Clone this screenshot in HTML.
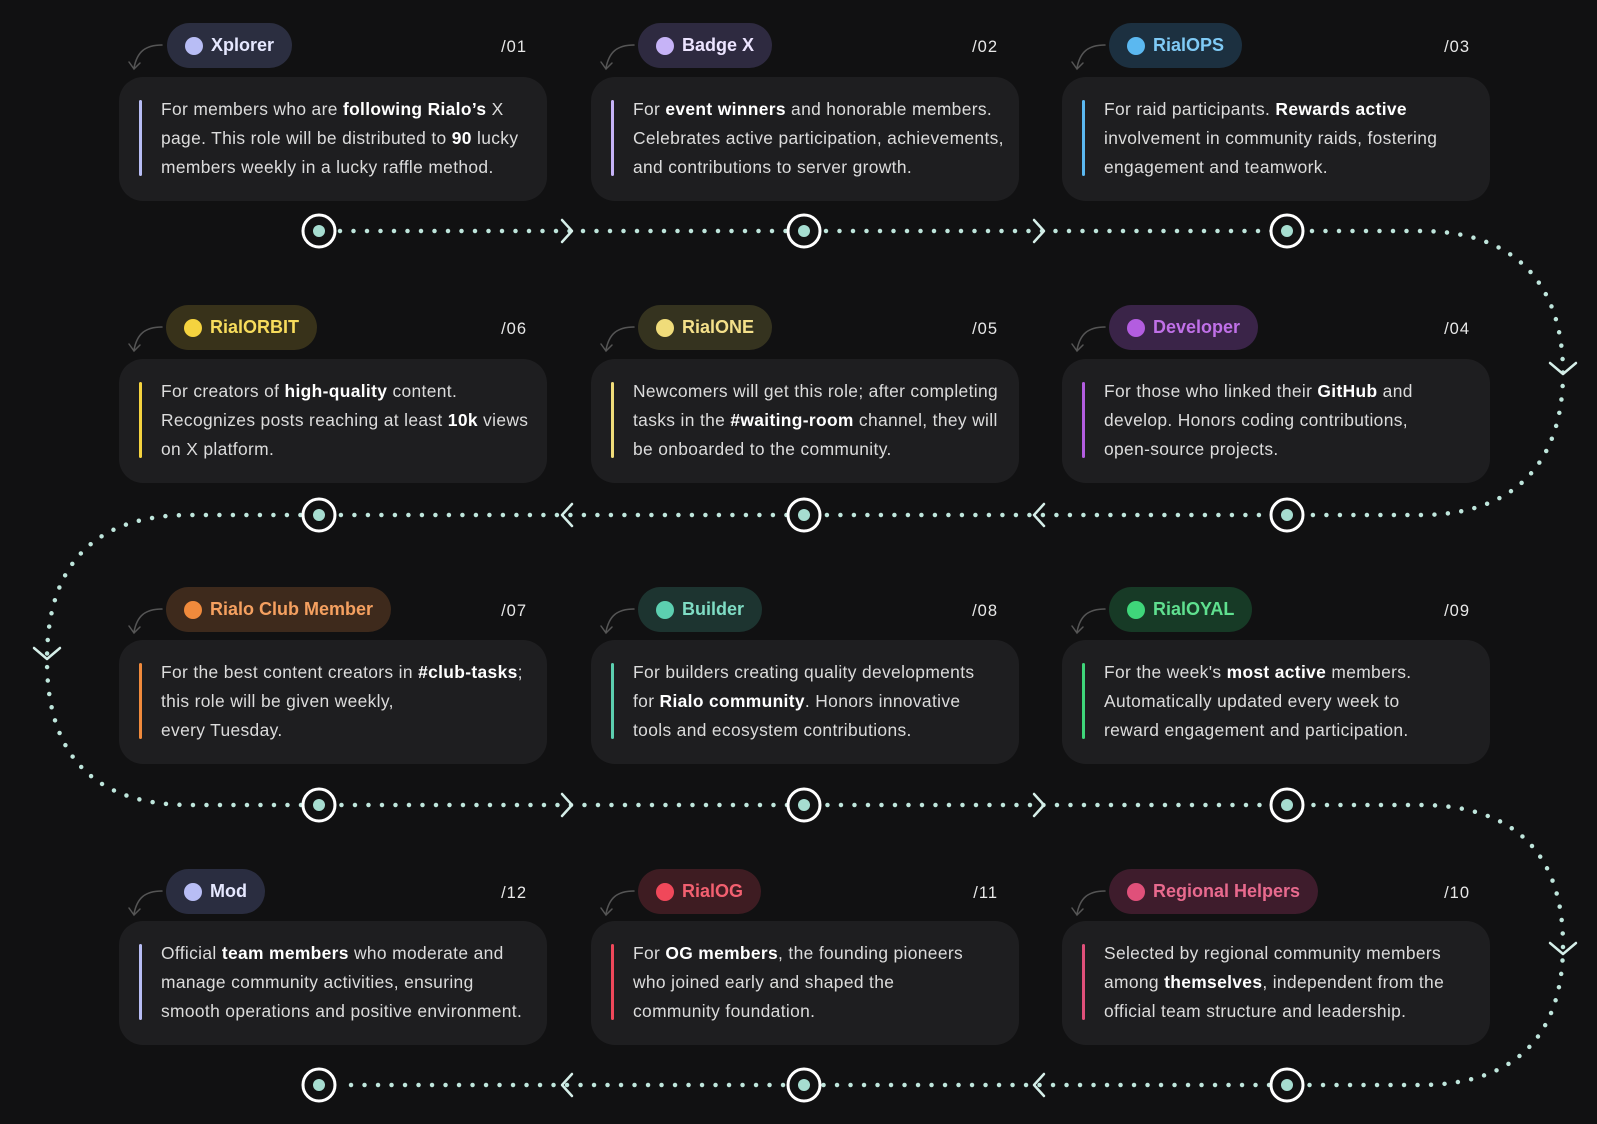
<!DOCTYPE html>
<html><head><meta charset="utf-8"><style>
*{margin:0;padding:0;box-sizing:border-box}
body{width:1597px;height:1124px;background:#111112;position:relative;overflow:hidden;font-family:"Liberation Sans",sans-serif}
.card{position:absolute;width:428px;height:124px;background:#1e1e20;border-radius:24px}
.card .bar{position:absolute;left:20px;top:23px;width:3px;height:76px;border-radius:2px}
.card p{position:absolute;left:42px;top:18px;white-space:nowrap;color:#dcdcdc;font-size:17.4px;line-height:29px;letter-spacing:0.35px}
.card b{color:#fff}
.pill{position:absolute;height:45px;border-radius:23px;display:flex;align-items:center;padding:0 18px 0 18px;font-size:18px;font-weight:bold;white-space:nowrap}
.pill i{display:inline-block;width:18px;height:18px;border-radius:50%;margin-right:8px}
.num{position:absolute;color:#e8e8e8;font-size:16.5px;width:60px;text-align:right;letter-spacing:1px}
svg{position:absolute;left:0;top:0}
</style></head><body>
<svg width="1597" height="1124">
<g fill="none" stroke="#bfe6dc" stroke-width="4.5" stroke-linecap="round" stroke-dasharray="0 13.5">
<path d="M340,231 H1420 C1530,231 1563,300 1563,373 C1563,446 1530,515 1420,515 H190 C80,515 47,580 47,660 C47,740 80,805 190,805 H1420 C1530,805 1563,870 1563,945 C1563,1020 1530,1085 1420,1085 H340"/>
</g>
<g fill="none" stroke="#d6efe9" stroke-width="2.5" stroke-linecap="round" stroke-linejoin="round">
<path d="M562,220 L572,231 L562,242"/><path d="M1034,220 L1044,231 L1034,242"/>
<path d="M572,504 L562,515 L572,526"/><path d="M1044,504 L1034,515 L1044,526"/>
<path d="M562,794 L572,805 L562,816"/><path d="M1034,794 L1044,805 L1034,816"/>
<path d="M572,1074 L562,1085 L572,1096"/><path d="M1044,1074 L1034,1085 L1044,1096"/>
<path d="M1550,363 L1563,374 L1576,363"/><path d="M1550,943 L1563,954 L1576,943"/>
<path d="M34,648 L47,659 L60,648"/>
</g>
<g fill="#111112" stroke="#fff" stroke-width="3">
<circle cx="319" cy="231" r="16"/><circle cx="804" cy="231" r="16"/><circle cx="1287" cy="231" r="16"/>
<circle cx="319" cy="515" r="16"/><circle cx="804" cy="515" r="16"/><circle cx="1287" cy="515" r="16"/>
<circle cx="319" cy="805" r="16"/><circle cx="804" cy="805" r="16"/><circle cx="1287" cy="805" r="16"/>
<circle cx="319" cy="1085" r="16"/><circle cx="804" cy="1085" r="16"/><circle cx="1287" cy="1085" r="16"/>
</g>
<g fill="#a6ddd0">
<circle cx="319" cy="231" r="6"/><circle cx="804" cy="231" r="6"/><circle cx="1287" cy="231" r="6"/>
<circle cx="319" cy="515" r="6"/><circle cx="804" cy="515" r="6"/><circle cx="1287" cy="515" r="6"/>
<circle cx="319" cy="805" r="6"/><circle cx="804" cy="805" r="6"/><circle cx="1287" cy="805" r="6"/>
<circle cx="319" cy="1085" r="6"/><circle cx="804" cy="1085" r="6"/><circle cx="1287" cy="1085" r="6"/>
</g>
<g fill="none" stroke="#555" stroke-width="1.5" stroke-linecap="round">
<path d="M162,45 C145,45 137,52 134,68 M129,62 L134,69 L140,63"/>
<path d="M634,45 C617,45 609,52 606,68 M601,62 L606,69 L612,63"/>
<path d="M1105,45 C1088,45 1080,52 1077,68 M1072,62 L1077,69 L1083,63"/>
<path d="M162,327 C145,327 137,334 134,350 M129,344 L134,351 L140,345"/>
<path d="M634,327 C617,327 609,334 606,350 M601,344 L606,351 L612,345"/>
<path d="M1105,327 C1088,327 1080,334 1077,350 M1072,344 L1077,351 L1083,345"/>
<path d="M162,609 C145,609 137,616 134,632 M129,626 L134,633 L140,627"/>
<path d="M634,609 C617,609 609,616 606,632 M601,626 L606,633 L612,627"/>
<path d="M1105,609 C1088,609 1080,616 1077,632 M1072,626 L1077,633 L1083,627"/>
<path d="M162,891 C145,891 137,898 134,914 M129,908 L134,915 L140,909"/>
<path d="M634,891 C617,891 609,898 606,914 M601,908 L606,915 L612,909"/>
<path d="M1105,891 C1088,891 1080,898 1077,914 M1072,908 L1077,915 L1083,909"/>
</g>
</svg>

<div class="pill" style="left:167px;top:23px;background:#2b2e40;color:#e6e8ff"><i style="background:#b8bdf5"></i>Xplorer</div>
<div class="num" style="left:467px;top:38px">/01</div>
<div class="card" style="left:119px;top:77px"><div class="bar" style="background:#b8bdf5"></div><p>For members who are <b>following Rialo’s</b> X<br>page. This role will be distributed to <b>90</b> lucky<br>members weekly in a lucky raffle method.</p></div>

<div class="pill" style="left:638px;top:23px;background:#2e2a40;color:#ece4ff"><i style="background:#c6b3f7"></i>Badge X</div>
<div class="num" style="left:938px;top:38px">/02</div>
<div class="card" style="left:591px;top:77px"><div class="bar" style="background:#c6b3f7"></div><p>For <b>event winners</b> and honorable members.<br>Celebrates active participation, achievements,<br>and contributions to server growth.</p></div>

<div class="pill" style="left:1109px;top:23px;background:#1c3040;color:#7fcaf5"><i style="background:#5bb8f0"></i>RialOPS</div>
<div class="num" style="left:1410px;top:38px">/03</div>
<div class="card" style="left:1062px;top:77px"><div class="bar" style="background:#5bb8f0"></div><p>For raid participants. <b>Rewards active</b><br>involvement in community raids, fostering<br>engagement and teamwork.</p></div>

<div class="pill" style="left:166px;top:305px;background:#38321a;color:#f7dc5c"><i style="background:#f5d33f"></i>RialORBIT</div>
<div class="num" style="left:467px;top:320px">/06</div>
<div class="card" style="left:119px;top:359px"><div class="bar" style="background:#f5d33f"></div><p>For creators of <b>high-quality</b> content.<br>Recognizes posts reaching at least <b>10k</b> views<br>on X platform.</p></div>

<div class="pill" style="left:638px;top:305px;background:#35331f;color:#f4e08a"><i style="background:#f0dc7a"></i>RialONE</div>
<div class="num" style="left:938px;top:320px">/05</div>
<div class="card" style="left:591px;top:359px"><div class="bar" style="background:#f0dc7a"></div><p>Newcomers will get this role; after completing<br>tasks in the <b>#waiting-room</b> channel, they will<br>be onboarded to the community.</p></div>

<div class="pill" style="left:1109px;top:305px;background:#3a2448;color:#c070e8"><i style="background:#b35de0"></i>Developer</div>
<div class="num" style="left:1410px;top:320px">/04</div>
<div class="card" style="left:1062px;top:359px"><div class="bar" style="background:#b35de0"></div><p>For those who linked their <b>GitHub</b> and<br>develop. Honors coding contributions,<br>open-source projects.</p></div>

<div class="pill" style="left:166px;top:587px;background:#3e2a1c;color:#f5a060"><i style="background:#f08a3c"></i>Rialo Club Member</div>
<div class="num" style="left:467px;top:602px">/07</div>
<div class="card" style="left:119px;top:640px"><div class="bar" style="background:#f08a3c"></div><p>For the best content creators in <b>#club-tasks</b>;<br>this role will be given weekly,<br>every Tuesday.</p></div>

<div class="pill" style="left:638px;top:587px;background:#1d3430;color:#7fdcc4"><i style="background:#5ccfb0"></i>Builder</div>
<div class="num" style="left:938px;top:602px">/08</div>
<div class="card" style="left:591px;top:640px"><div class="bar" style="background:#5ccfb0"></div><p>For builders creating quality developments<br>for <b>Rialo community</b>. Honors innovative<br>tools and ecosystem contributions.</p></div>

<div class="pill" style="left:1109px;top:587px;background:#173a26;color:#5fe08f"><i style="background:#3fd67a"></i>RialOYAL</div>
<div class="num" style="left:1410px;top:602px">/09</div>
<div class="card" style="left:1062px;top:640px"><div class="bar" style="background:#3fd67a"></div><p>For the week's <b>most active</b> members.<br>Automatically updated every week to<br>reward engagement and participation.</p></div>

<div class="pill" style="left:166px;top:869px;background:#2a2d40;color:#e6e8ff"><i style="background:#b8bdf5"></i>Mod</div>
<div class="num" style="left:467px;top:884px">/12</div>
<div class="card" style="left:119px;top:921px"><div class="bar" style="background:#b8bdf5"></div><p>Official <b>team members</b> who moderate and<br>manage community activities, ensuring<br>smooth operations and positive environment.</p></div>

<div class="pill" style="left:638px;top:869px;background:#3e1c22;color:#f26070"><i style="background:#f0485a"></i>RialOG</div>
<div class="num" style="left:938px;top:884px">/11</div>
<div class="card" style="left:591px;top:921px"><div class="bar" style="background:#f0485a"></div><p>For <b>OG members</b>, the founding pioneers<br>who joined early and shaped the<br>community foundation.</p></div>

<div class="pill" style="left:1109px;top:869px;background:#3e1c2c;color:#e86a8e"><i style="background:#e0507a"></i>Regional Helpers</div>
<div class="num" style="left:1410px;top:884px">/10</div>
<div class="card" style="left:1062px;top:921px"><div class="bar" style="background:#e0507a"></div><p>Selected by regional community members<br>among <b>themselves</b>, independent from the<br>official team structure and leadership.</p></div>
</body></html>
